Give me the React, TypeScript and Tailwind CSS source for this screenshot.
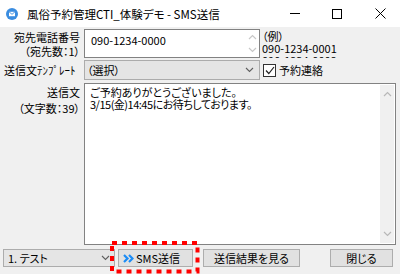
import React from "react";

const Caret = ({ dir, color = "#b8b8b8" }: { dir: "up" | "down"; color?: string }) => (
  <svg width="9" height="6" viewBox="0 0 9 6">
    {dir === "up" ? (
      <polyline points="1,5 4.5,1.5 8,5" fill="none" stroke={color} strokeWidth="1.2" />
    ) : (
      <polyline points="1,1 4.5,4.5 8,1" fill="none" stroke={color} strokeWidth="1.2" />
    )}
  </svg>
);

const SelectChevron = () => (
  <svg width="9" height="6" viewBox="0 0 9 6">
    <polyline points="1,1 4.5,4.5 8,1" fill="none" stroke="#606060" strokeWidth="1.1" />
  </svg>
);

export default function App() {
  return (
    <div className="relative w-[400px] h-[274px] overflow-hidden bg-[#f0f0f0] text-black font-['Noto_Sans_CJK_JP',sans-serif] [font-feature-settings:'palt'] text-[11px] leading-[12px]">
      {/* Title bar */}
      <div className="flex h-[27px] items-center bg-white">
        <svg className="ml-[6px]" width="12" height="12" viewBox="0 0 12 12">
          <circle cx="6" cy="6" r="6" fill="#3b8de0" />
          <rect x="3" y="3.8" width="6" height="4.4" fill="white" />
          <polyline points="3,3.8 6,6.3 9,3.8" fill="none" stroke="#3b8de0" strokeWidth="0.9" />
        </svg>
        <span className="ml-[9px] text-[11.5px] whitespace-nowrap">風俗予約管理CTI_体験デモ - SMS送信</span>
        <div className="ml-auto flex h-full">
          <div className="flex h-full w-[42px] items-center justify-center">
            <div className="h-px w-[10px] bg-black" />
          </div>
          <div className="flex h-full w-[42px] items-center justify-center">
            <div className="h-[10px] w-[10px] border border-black" />
          </div>
          <div className="flex h-full w-[42px] items-center justify-center pl-[2px]">
            <svg width="11" height="11" viewBox="0 0 11 11">
              <line x1="0.5" y1="0.5" x2="10.5" y2="10.5" stroke="black" strokeWidth="1" />
              <line x1="10.5" y1="0.5" x2="0.5" y2="10.5" stroke="black" strokeWidth="1" />
            </svg>
          </div>
        </div>
      </div>

      {/* Row 1 */}
      <div className="mt-[2px] flex">
        <div className="w-[84px] pr-[4px] pt-[1px] text-right leading-[14px] whitespace-nowrap">
          <div>宛先電話番号</div>
          <div>（宛先数：1）</div>
        </div>
        <div className="flex h-[29px] w-[176px] border border-[#828282] bg-white">
          <div className="flex-1 pl-[6px] pt-[4px]">090-1234-0000</div>
          <div className="flex w-[14px] flex-col items-center justify-between py-[4px]">
            <Caret dir="up" color="#c8c8c8" />
            <Caret dir="down" color="#c8c8c8" />
          </div>
        </div>
        <div className="ml-[2px] h-[29px] overflow-hidden pt-[1px] leading-[12px]">
          <div>（例）</div>
          <div>090-1234-0001</div>
          <div>090-1234-0002</div>
        </div>
      </div>

      {/* Row 2 */}
      <div className="mt-[2px] flex h-[20px] items-center">
        <div className="w-[84px] pl-[4px] whitespace-nowrap">送信文ﾃﾝﾌﾟﾚｰﾄ</div>
        <div className="flex h-[20px] w-[176px] items-center border border-[#acacac] bg-[#e5e5e5] pl-[2px] pr-[5px]">
          <span className="flex-1">（選択）</span>
          <SelectChevron />
        </div>
        <div className="ml-[3px] flex h-[13px] w-[13px] items-center justify-center border border-[#333] bg-white">
          <svg width="10" height="9" viewBox="0 0 10 9">
            <polyline points="1,4.5 3.8,7.5 9,1" fill="none" stroke="#222" strokeWidth="1.2" />
          </svg>
        </div>
        <span className="ml-[3px] whitespace-nowrap">予約連絡</span>
      </div>

      {/* Row 3 */}
      <div className="mt-[3px] flex h-[162px]">
        <div className="w-[84px] pr-[4px] pt-[1px] text-right leading-[16px] whitespace-nowrap">
          <div>送信文</div>
          <div>（文字数：39）</div>
        </div>
        <div className="mr-[4px] flex flex-1 border border-[#828282] bg-white">
          <div className="flex-1 pl-[5px] pt-[2px] leading-[12px]">
            <div>ご予約ありがとうございました。</div>
            <div className="tracking-[-0.5px]">3/15(金)14:45にお待ちしております。</div>
          </div>
          <div className="my-[1px] mr-[1px] flex w-[14px] flex-col items-center justify-between bg-[#f0f0f0] py-[6px]">
            <Caret dir="up" />
            <Caret dir="down" />
          </div>
        </div>
      </div>

      {/* Row 4 */}
      <div className="mt-[4px] flex h-[18px] items-stretch">
        <div className="ml-[3px] flex w-[112px] items-center border border-[#acacac] bg-[#e5e5e5] pl-[4px] pr-[4px]">
          <span className="flex-1">1. テスト</span>
          <SelectChevron />
        </div>
        <div className="ml-[3px] flex w-[75px] items-center border border-[#adadad] bg-[#e1e1e1] pl-[4px]">
          <svg width="11" height="9" viewBox="0 0 11 9">
            <polyline points="1,1 4.5,4.5 1,8" fill="none" stroke="#1c8cf5" strokeWidth="2.2" />
            <polyline points="6,1 9.5,4.5 6,8" fill="none" stroke="#1c8cf5" strokeWidth="2.2" />
          </svg>
          <span className="ml-[2px]">SMS送信</span>
        </div>
        <div className="ml-[10px] flex w-[97px] items-center justify-center border border-[#adadad] bg-[#e1e1e1]">
          送信結果を見る
        </div>
        <div className="ml-[30px] flex w-[63px] items-center justify-center border border-[#adadad] bg-[#e1e1e1]">
          閉じる
        </div>
      </div>

      {/* Red dotted highlight */}
      <svg className="absolute left-[110px] top-[241px]" width="92" height="36" viewBox="0 0 92 36">
        <rect x="2" y="2" width="85.5" height="28.5" fill="none" stroke="#ff0000" strokeWidth="4" strokeDasharray="5 5" />
      </svg>
    </div>
  );
}
